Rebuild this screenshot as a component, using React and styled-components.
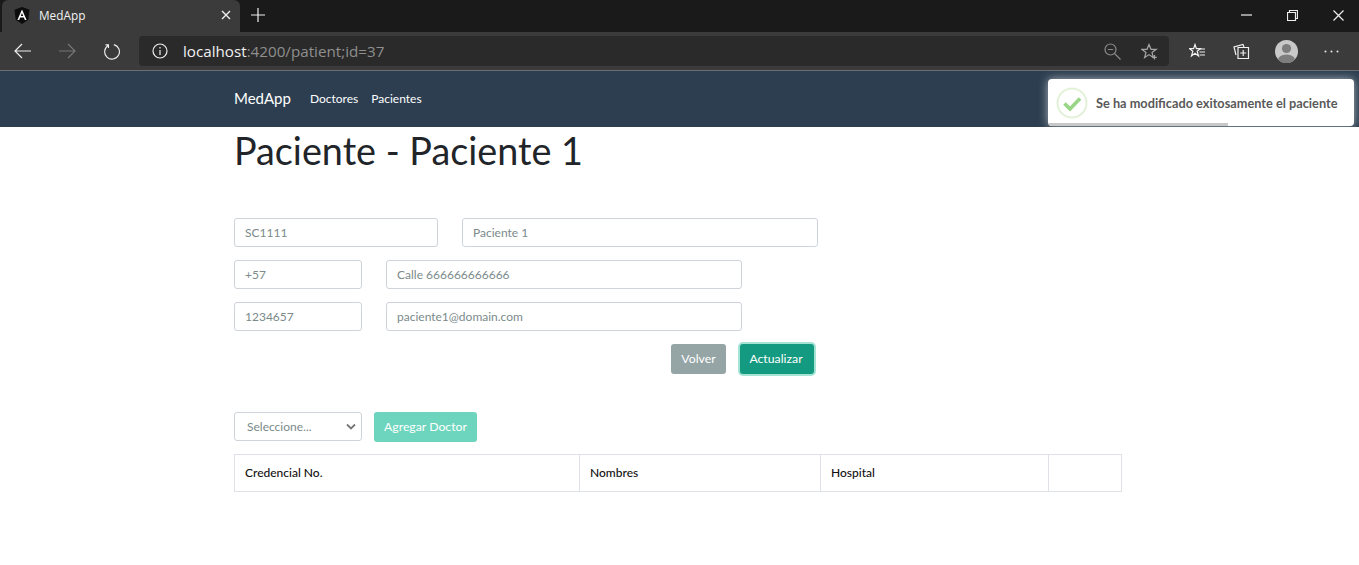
import React from "react";
import styled, { createGlobalStyle } from "styled-components";

const GlobalStyle = createGlobalStyle`
  html, body {
    margin: 0;
    padding: 0;
    background: #fff;
    font-family: "Lato", "Open Sans", sans-serif;
    overflow: hidden;
  }
  * {
    box-sizing: border-box;
  }
`;

const Page = styled.div`
  position: relative;
  width: 1359px;
  height: 565px;
  overflow: hidden;
`;

const TabStrip = styled.div`
  height: 32px;
  background: #1a1a1a;
  display: flex;
  align-items: flex-end;
  padding-left: 2px;
`;

const Tab = styled.div`
  width: 238px;
  height: 32px;
  background: #3b3b3b;
  border-radius: 6px 6px 0 0;
  display: flex;
  align-items: center;
  padding: 0 9px 2px 12px;
  color: #f2f2f2;
  font-family: "Open Sans", sans-serif;
  font-size: 11.8px;
  gap: 9px;
`;

const TabTitle = styled.span`
  flex: 1;
`;

const NewTab = styled.div`
  width: 36px;
  height: 32px;
  padding-bottom: 2px;
  display: flex;
  align-items: center;
  justify-content: center;
`;

const WindowControls = styled.div`
  margin-left: auto;
  height: 32px;
  display: flex;
  align-items: center;
  padding: 0 11px 2px 0;
  gap: 26px;
`;

const WinButton = styled.div`
  width: 20px;
  height: 24px;
  display: flex;
  align-items: center;
  justify-content: center;
`;

const Toolbar = styled.div`
  height: 39px;
  background: #3b3b3b;
  border-bottom: 1px solid #6b6f73;
  display: flex;
  align-items: center;
  padding: 0 0 0 12px;
`;

const NavButton = styled.div`
  width: 22px;
  height: 22px;
  margin-right: 22px;
  display: flex;
  align-items: center;
  justify-content: center;
`;

const AddressBar = styled.div`
  width: 1030px;
  height: 30px;
  margin-left: -5px;
  background: #2a2a2a;
  border-radius: 4px;
  display: flex;
  align-items: center;
  padding: 0 10px 0 13px;
  font-family: "Open Sans", sans-serif;
  font-size: 15.2px;
`;

const Host = styled.span`
  color: #f0f0f0;
  margin-left: 15px;
`;

const UrlRest = styled.span`
  color: #8f8f8f;
  flex: 1;
`;

const BarIcon = styled.div`
  width: 20px;
  height: 20px;
  margin-left: ${(p) => p.$gap || 0}px;
  display: flex;
  align-items: center;
  justify-content: center;
`;

const ToolIcons = styled.div`
  display: flex;
  align-items: center;
  margin-left: 5px;
`;

const ToolSlot = styled.div`
  width: 45px;
  height: 30px;
  display: flex;
  align-items: center;
  justify-content: center;
`;

const Avatar = styled.div`
  width: 23px;
  height: 23px;
  border-radius: 50%;
  overflow: hidden;
`;

const NavBar = styled.nav`
  height: 56px;
  background: #2c3e50;
  display: flex;
  align-items: center;
  padding: 0 0 2px 234px;
`;

const Brand = styled.a`
  color: #fff;
  font-size: 15px;
  margin-right: 19px;
`;

const NavLink = styled.a`
  color: #fff;
  font-size: 12px;
  margin-right: 13px;
`;

const Toast = styled.div`
  position: absolute;
  left: 1048px;
  top: 79px;
  width: 306px;
  height: 47px;
  background: #fff;
  border-radius: 4px;
  box-shadow: 0 0 10px rgba(255, 255, 255, 0.6);
  display: flex;
  align-items: center;
  padding-left: 8px;
  overflow: hidden;
  color: #595959;
  font-size: 12.75px;
  font-weight: 700;
  gap: 8px;
`;

const ToastBar = styled.div`
  position: absolute;
  left: 0;
  bottom: 0;
  width: 180px;
  height: 3px;
  background: #c8c8c8;
`;

const Content = styled.main`
  width: 888px;
  margin-left: 234px;
`;

const Title = styled.h1`
  margin: 0 0 43px;
  height: 48px;
  font-size: 37.75px;
  line-height: 48px;
  font-weight: 400;
  color: #212529;
`;

const FormRow = styled.div`
  display: flex;
  gap: 24px;
  margin-bottom: 13px;
`;

const Field = styled.input`
  width: ${(p) => p.$w}px;
  height: 29px;
  border: 1px solid #ced4da;
  border-radius: 3px;
  padding: 0 10px;
  font-family: "Lato", sans-serif;
  font-size: 12px;
  color: #7b8a8b;
  background: #fff;
  outline: none;
`;

const Actions = styled.div`
  width: 580px;
  height: 30px;
  display: flex;
  justify-content: flex-end;
  gap: 14px;
  margin-bottom: 38px;
`;

const Button = styled.button`
  height: 30px;
  width: ${(p) => p.$w}px;
  padding: 0 ${(p) => (p.$focus ? 2 : 0)}px 2px 0;
  border: 0;
  border-radius: 3px;
  background: ${(p) => p.$bg};
  color: #fff;
  font-family: "Lato", sans-serif;
  font-size: 12.25px;
  box-shadow: ${(p) => (p.$focus ? "0 0 0 2px #a5e3d5" : "none")};
`;

const DoctorRow = styled.div`
  display: flex;
  gap: 12px;
  margin-bottom: 12px;
`;

const Select = styled.div`
  width: 128px;
  height: 29px;
  border: 1px solid #ced4da;
  border-radius: 3px;
  display: flex;
  align-items: center;
  justify-content: space-between;
  padding: 0 5px 0 12px;
  font-size: 12px;
  color: #7b8a8b;
`;

const Table = styled.div`
  width: 888px;
  height: 38px;
  display: grid;
  grid-template-columns: 344px 241px 228px 73px;
  border: 1px solid #dee2e6;
`;

const HeadCell = styled.div`
  display: flex;
  align-items: center;
  padding: 0 0 2px 10px;
  font-size: 12px;
  font-weight: 500;
  color: #111;
  border-left: ${(p) => (p.$first ? "0" : "1px solid #dee2e6")};
`;

const line = { fill: "none", stroke: "currentColor", strokeWidth: 1.2 };

const App = () => {
  return (
    <Page>
      <GlobalStyle />
      <TabStrip>
        <Tab>
          <svg width="16" height="17" viewBox="0 0 16 17">
            <path d="M8 0 L15.5 2.7 L14.3 12.8 L8 17 L1.7 12.8 L.5 2.7Z" fill="#0c0c0c" />
            <path d="M8 2.5 L3.4 13 H5.2 L6.1 10.6 H9.9 L10.8 13 H12.6Z M6.8 9.1 L8 6 L9.2 9.1Z" fill="#fff" fillRule="evenodd" />
          </svg>
          <TabTitle>MedApp</TabTitle>
          <svg width="10" height="10" viewBox="0 0 10 10" style={{ color: "#eee" }}>
            <path d="M1 1 L9 9 M9 1 L1 9" {...line} strokeWidth="1.4" />
          </svg>
        </Tab>
        <NewTab>
          <svg width="14" height="14" viewBox="0 0 14 14" style={{ color: "#eee" }}>
            <path d="M7 0 V14 M0 7 H14" {...line} />
          </svg>
        </NewTab>
        <WindowControls>
          <WinButton>
            <svg width="11" height="2" viewBox="0 0 11 2" style={{ color: "#eee" }}>
              <path d="M0 1 H11" {...line} />
            </svg>
          </WinButton>
          <WinButton>
            <svg width="11" height="11" viewBox="0 0 11 11" style={{ color: "#eee" }}>
              <path d="M.5 2.5 H8.5 V10.5 H.5Z M2.5 2.5 V.5 H10.5 V8.5 H8.5" {...line} />
            </svg>
          </WinButton>
          <WinButton>
            <svg width="11" height="11" viewBox="0 0 11 11" style={{ color: "#eee" }}>
              <path d="M.5 .5 L10.5 10.5 M10.5 .5 L.5 10.5" {...line} />
            </svg>
          </WinButton>
        </WindowControls>
      </TabStrip>
      <Toolbar>
        <NavButton>
          <svg width="18" height="16" viewBox="0 0 18 16" style={{ color: "#eee" }}>
            <path d="M17 8 H1 M8 1 L1 8 L8 15" {...line} />
          </svg>
        </NavButton>
        <NavButton>
          <svg width="18" height="16" viewBox="0 0 18 16" style={{ color: "#777" }}>
            <path d="M1 8 H17 M10 1 L17 8 L10 15" {...line} />
          </svg>
        </NavButton>
        <NavButton>
          <svg width="17" height="17" viewBox="0 0 18 18" style={{ color: "#eee" }}>
            <path d="M5.5 2.6 A7.8 7.8 0 1 0 11.5 1.7 M2.6 2 H5.8 V5.2" {...line} />
          </svg>
        </NavButton>
        <AddressBar>
          <svg width="16" height="16" viewBox="0 0 16 16" style={{ color: "#eee" }}>
            <circle cx="8" cy="8" r="7" {...line} />
            <path d="M8 7 V12 M8 4 V5.4" {...line} />
          </svg>
          <Host>localhost</Host>
          <UrlRest>:4200/patient;id=37</UrlRest>
          <BarIcon>
            <svg width="17" height="17" viewBox="0 0 17 17" style={{ color: "#8a8a8a" }}>
              <circle cx="6.5" cy="6.5" r="5.5" {...line} />
              <path d="M3.8 6.5 H9.2 M10.5 10.5 L16.5 16.5" {...line} />
            </svg>
          </BarIcon>
          <BarIcon $gap={17}>
            <svg width="17" height="17" viewBox="0 0 17 17" style={{ color: "#a5a5a5" }}>
              <path d="M8 1.5 L10 6.3 H15.2 L11 9.5 L12.4 14.5 L8 11.6 L3.6 14.5 L5 9.5 L.8 6.3 H6Z M13.5 12 V16.5 M11.2 14.3 H15.8" {...line} />
            </svg>
          </BarIcon>
        </AddressBar>
        <ToolIcons>
          <ToolSlot>
            <svg width="16" height="16" viewBox="0 0 16 16" style={{ color: "#f0f0f0" }}>
              <path d="M6 1.5 L7.4 5.6 H11.4 L8.2 8.2 L9.5 13 L6 10.2 L2.5 13 L3.8 8.2 L.6 5.6 H4.6Z" {...line} />
              <path d="M10 6 H16 M10.5 9 H16 M10.5 12 H16" {...line} />
            </svg>
          </ToolSlot>
          <ToolSlot>
            <svg width="17" height="17" viewBox="0 0 17 17" style={{ color: "#f0f0f0" }}>
              <path d="M3 12 L1 4 L10 1.5 L11 4 M5 4.5 H15.5 V15.5 H5Z M10.2 7 V13 M7.2 10 H13.2" {...line} />
            </svg>
          </ToolSlot>
          <ToolSlot>
            <Avatar>
              <svg width="23" height="23" viewBox="0 0 23 23">
                <rect width="23" height="23" fill="#c9c9c9" />
                <circle cx="11.5" cy="8.5" r="4.6" fill="#7d7d7d" />
                <ellipse cx="11.5" cy="20" rx="8.5" ry="5.5" fill="#7d7d7d" />
              </svg>
            </Avatar>
          </ToolSlot>
          <ToolSlot>
            <svg width="15" height="3" viewBox="0 0 15 3">
              <circle cx="1.5" cy="1.5" r="1" fill="#e8e8e8" />
              <circle cx="7.5" cy="1.5" r="1" fill="#e8e8e8" />
              <circle cx="13.5" cy="1.5" r="1" fill="#e8e8e8" />
            </svg>
          </ToolSlot>
        </ToolIcons>
      </Toolbar>
      <NavBar>
        <Brand>MedApp</Brand>
        <NavLink>Doctores</NavLink>
        <NavLink>Pacientes</NavLink>
      </NavBar>
      <Toast>
        <svg width="32" height="32" viewBox="0 0 32 32">
          <circle cx="16" cy="16" r="14.5" fill="none" stroke="#e3f1d9" strokeWidth="2" />
          <path d="M8.5 16.5 L14 22 L24 11.5" fill="none" stroke="#98d685" strokeWidth="3.6" />
        </svg>
        <span>Se ha modificado exitosamente el paciente</span>
        <ToastBar />
      </Toast>
      <Content>
        <Title>Paciente - Paciente 1</Title>
        <FormRow>
          <Field $w={204} readOnly value="SC1111" />
          <Field $w={356} readOnly value="Paciente 1" />
        </FormRow>
        <FormRow>
          <Field $w={128} readOnly value="+57" />
          <Field $w={356} readOnly value="Calle 666666666666" />
        </FormRow>
        <FormRow>
          <Field $w={128} readOnly value="1234657" />
          <Field $w={356} readOnly value="paciente1@domain.com" />
        </FormRow>
        <Actions>
          <Button $bg="#95a5a6" $w={55}>Volver</Button>
          <Button $bg="#149a80" $w={74} $focus>Actualizar</Button>
        </Actions>
        <DoctorRow>
          <Select>
            <span>Seleccione...</span>
            <svg width="10" height="7" viewBox="0 0 10 7" style={{ color: "#777" }}>
              <path d="M1 1.5 L5 5.5 L9 1.5" {...line} strokeWidth="1.8" />
            </svg>
          </Select>
          <Button $bg="#6dd5bd" $w={103}>Agregar Doctor</Button>
        </DoctorRow>
        <Table>
          <HeadCell $first>Credencial No.</HeadCell>
          <HeadCell>Nombres</HeadCell>
          <HeadCell>Hospital</HeadCell>
          <HeadCell />
        </Table>
      </Content>
    </Page>
  );
};

export default App;
